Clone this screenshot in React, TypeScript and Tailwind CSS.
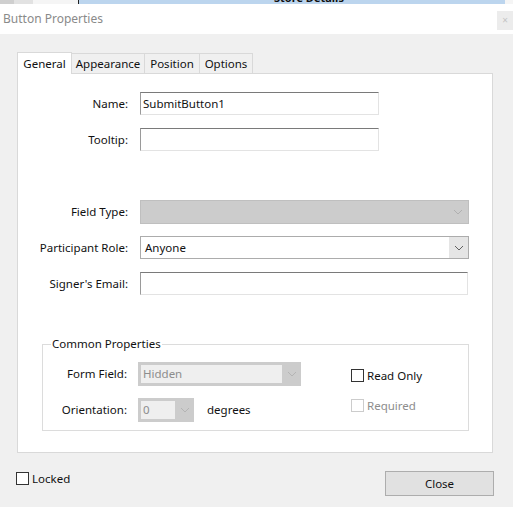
import React from "react";

const font = { fontFamily: '"Noto Sans", "Open Sans", sans-serif' };

function Chevron({ color = "#606060" }: { color?: string }) {
  return (
    <svg width="10" height="6" viewBox="0 0 10 6" fill="none">
      <polyline points="1,1 5,5 9,1" stroke={color} strokeWidth="1" />
    </svg>
  );
}

function TextBox({ value, width }: { value?: string; width: string }) {
  return (
    <div
      className={`${width} h-[23px] bg-white border border-t-[#7a7a7a] border-l-[#9a9a9a] border-r-[#e3e3e3] border-b-[#e3e3e3] flex items-center px-[2px] text-[11.5px] text-[#111]`}
    >
      {value}
    </div>
  );
}

function Checkbox({ label, disabled }: { label: string; disabled?: boolean }) {
  return (
    <div className="flex items-center gap-[3px]">
      <div
        className={`w-[13px] h-[13px] bg-white border ${
          disabled ? "border-[#cccccc]" : "border-[#333333]"
        }`}
      />
      <span className={`text-[11.5px] ${disabled ? "text-[#8d8d8d]" : "text-[#111]"}`}>
        {label}
      </span>
    </div>
  );
}

function Tab({ label, width, active }: { label: string; width: string; active?: boolean }) {
  return (
    <div
      className={
        active
          ? `${width} h-[22px] bg-white border border-[#d9d9d9] border-b-0 -mb-px relative z-10 flex items-center justify-center text-[11.5px] text-[#111]`
          : `${width} h-[20px] bg-[#f0f0f0] border border-l-0 border-[#d9d9d9] border-b-0 flex items-center justify-center text-[11.5px] text-[#111]`
      }
    >
      {label}
    </div>
  );
}

export default function App() {
  return (
    <div className="w-[513px] h-[507px] bg-[#f0f0f0] flex flex-col overflow-hidden" style={font}>
      {/* window behind */}
      <div className="h-[4px] flex shrink-0">
        <div className="w-[14px] bg-[#cfcfcf]" />
        <div className="w-[19px] bg-[#e2e2e2]" />
        <div className="w-[45px] bg-[#f5f5f5]" />
        <div className="w-px bg-[#222]" />
        <div className="flex-1 bg-[#bcd5ee] overflow-hidden">
          <div className="ml-[195px] -mt-[8px] text-[11px] font-bold text-[#111] leading-none">
            Store Details
          </div>
        </div>
        <div className="w-[8px] bg-[#f5f5f5]" />
      </div>

      {/* title bar */}
      <div className="h-[30px] bg-white flex items-center justify-between shrink-0">
        <span className="ml-[3px] text-[12px] text-[#8a8a8a]">Button Properties</span>
        <div className="w-[16px] h-[19px] mt-[2px] bg-[#ececec] flex items-center justify-center text-[10px] text-[#c4c4c4]">
          ×
        </div>
      </div>

      {/* body */}
      <div className="pt-[17px] px-[17px] flex flex-col">
        <div className="flex items-end h-[22px]">
          <Tab label="General" width="w-[55px]" active />
          <Tab label="Appearance" width="w-[73px]" />
          <Tab label="Position" width="w-[55px]" />
          <Tab label="Options" width="w-[53px]" />
        </div>

        <div className="w-[476px] h-[380px] bg-white border border-[#d9d9d9] pt-[18px] flex flex-col">
          <div className="flex items-center h-[23px]">
            <span className="w-[110px] text-right text-[11.5px] text-[#111]">Name:</span>
            <div className="ml-[12px]">
              <TextBox value="SubmitButton1" width="w-[239px]" />
            </div>
          </div>
          <div className="flex items-center h-[23px] mt-[13px]">
            <span className="w-[110px] text-right text-[11.5px] text-[#111]">Tooltip:</span>
            <div className="ml-[12px]">
              <TextBox width="w-[239px]" />
            </div>
          </div>

          <div className="flex items-center h-[24px] mt-[49px]">
            <span className="w-[110px] text-right text-[11.5px] text-[#111]">Field Type:</span>
            <div className="ml-[12px] w-[329px] h-[24px] bg-[#cccccc] border border-[#bfbfbf] flex items-center justify-end pr-[5px]">
              <Chevron color="#b0b0b0" />
            </div>
          </div>

          <div className="flex items-center h-[23px] mt-[12px]">
            <span className="w-[110px] text-right text-[11.5px] text-[#111]">Participant Role:</span>
            <div className="ml-[12px] w-[329px] h-[23px] bg-white border border-[#acacac] flex">
              <div className="flex-1 flex items-center pl-[4px] text-[11.5px] text-[#111]">Anyone</div>
              <div className="w-[19px] bg-[#e5e5e5] flex items-center justify-center">
                <Chevron />
              </div>
            </div>
          </div>

          <div className="flex items-center h-[23px] mt-[13px]">
            <span className="w-[110px] text-right text-[11.5px] text-[#111]">Signer's Email:</span>
            <div className="ml-[12px]">
              <TextBox width="w-[328px]" />
            </div>
          </div>

          <fieldset className="ml-[24px] mt-[41px] w-[427px] h-[95px] border border-[#dcdcdc] px-0">
            <legend className="ml-[8px] px-[1px] text-[11.5px] text-[#111] leading-[16px]">
              Common Properties
            </legend>
            <div className="flex mt-[10px]">
              <div className="flex flex-col gap-[12px]">
                <div className="flex items-center h-[24px]">
                  <span className="w-[84px] text-right text-[11.5px] text-[#111]">Form Field:</span>
                  <div className="ml-[11px] w-[163px] h-[24px] bg-[#cccccc] flex pl-[3px] py-[3px]">
                    <div className="flex-1 bg-[#efefef] flex items-center pl-[2px] text-[11.5px] text-[#8d8d8d]">
                      Hidden
                    </div>
                    <div className="w-[19px] flex items-center justify-center">
                      <Chevron color="#b4b4b4" />
                    </div>
                  </div>
                </div>
                <div className="flex items-center h-[24px]">
                  <span className="w-[84px] text-right text-[11.5px] text-[#111]">Orientation:</span>
                  <div className="ml-[11px] w-[56px] h-[24px] bg-[#cccccc] flex pl-[3px] py-[3px]">
                    <div className="flex-1 bg-[#efefef] flex items-center pl-[2px] text-[11.5px] text-[#8d8d8d]">
                      0
                    </div>
                    <div className="w-[19px] flex items-center justify-center">
                      <Chevron color="#b4b4b4" />
                    </div>
                  </div>
                  <span className="ml-[13px] text-[11.5px] text-[#111]">degrees</span>
                </div>
              </div>
              <div className="ml-[50px] flex flex-col gap-[13px] pt-[5px]">
                <Checkbox label="Read Only" />
                <Checkbox label="Required" disabled />
              </div>
            </div>
          </fieldset>
        </div>
      </div>

      {/* footer */}
      <div className="mt-[18px] pl-[16px] pr-[19px] flex items-start justify-between">
        <div className="-mt-[1px]">
          <Checkbox label="Locked" />
        </div>
        <button className="w-[109px] h-[25px] bg-[#e1e1e1] border border-[#adadad] text-[11.5px] text-[#111]">
          Close
        </button>
      </div>
    </div>
  );
}
